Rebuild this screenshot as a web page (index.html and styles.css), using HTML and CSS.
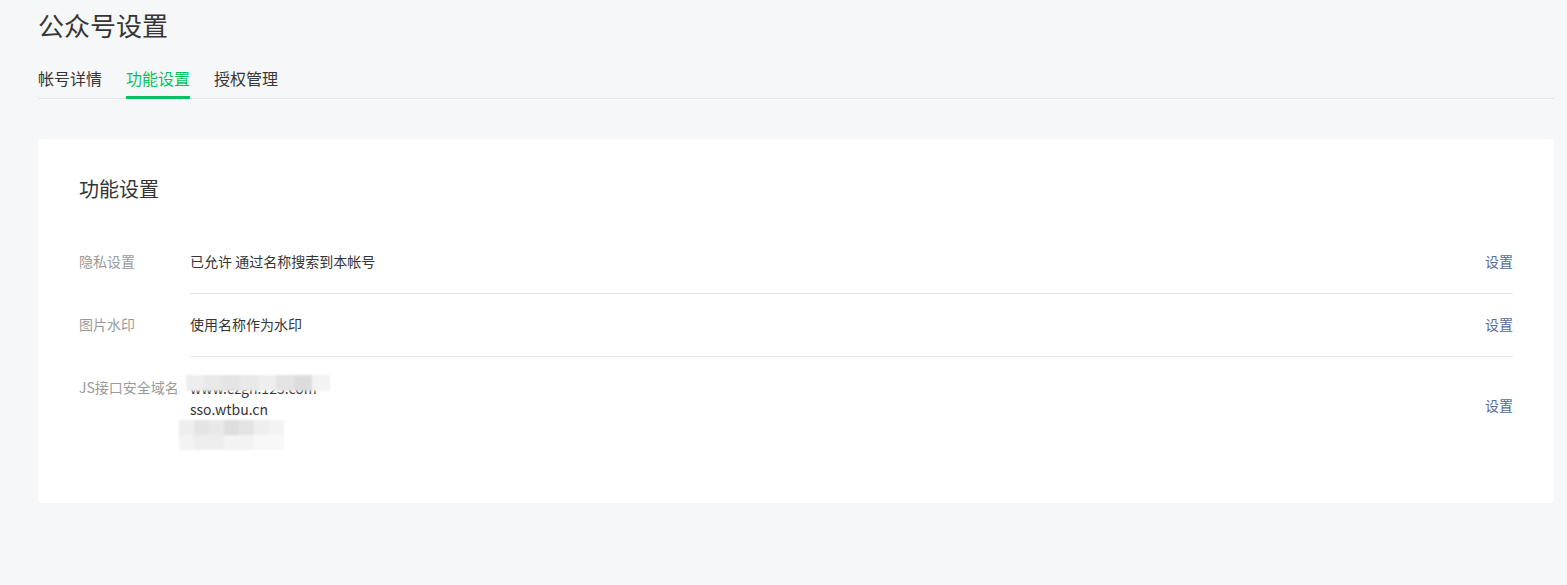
FILE: index.html
```html
<!DOCTYPE html>
<html lang="zh-CN">
<head>
<meta charset="utf-8">
<title>公众号设置</title>
<link rel="stylesheet" href="styles.css">
</head>
<body>
<div class="page">
  <h1 class="page-title">公众号设置</h1>
  <nav class="tabs">
    <a class="tab">帐号详情</a>
    <a class="tab active">功能设置</a>
    <a class="tab">授权管理</a>
  </nav>
  <section class="card">
    <h2 class="card-title">功能设置</h2>
    <div class="row">
      <div class="label">隐私设置</div>
      <div class="content">
        <div class="value">已允许 通过名称搜索到本帐号</div>
        <a class="action">设置</a>
      </div>
    </div>
    <div class="row">
      <div class="label">图片水印</div>
      <div class="content">
        <div class="value">使用名称作为水印</div>
        <a class="action">设置</a>
      </div>
    </div>
    <div class="row last">
      <div class="label">JS接口安全域名</div>
      <div class="content">
        <div class="value multi">
          <div class="line masked">www.ezgh.123.com
            <span class="mosaic m1"><i class="b4"></i><i class="b2"></i><i class="b1"></i><i class="b2"></i><i class="b4"></i><i class="b1"></i><i class="b3"></i><i class="b5"></i></span>
          </div>
          <div class="line">sso.wtbu.cn</div>
          <div class="line">
            <span class="mosaic m2">
              <span class="mrow"><i class="b4"></i><i class="b1"></i><i class="b2"></i><i class="b3"></i><i class="b1"></i><i class="b4"></i><i class="b5"></i></span>
              <span class="mrow"><i class="b5"></i><i class="b4"></i><i class="b4"></i><i class="b5"></i><i class="b5"></i><i class="b6"></i><i class="b6"></i></span>
            </span>
          </div>
        </div>
        <a class="action">设置</a>
      </div>
    </div>
  </section>
</div>
</body>
</html>
```

FILE: styles.css
```css
* { box-sizing: border-box; }
html, body {
  margin: 0;
  padding: 0;
  background: #f6f7f9;
  font-family: "Noto Sans CJK SC", "Microsoft YaHei", "Liberation Sans", sans-serif;
  color: #353535;
}
.page {
  width: 1516px;
  margin-left: 38px;
  padding-top: 7px;
}
.page-title {
  margin: 0;
  font-size: 26px;
  line-height: 36px;
  font-weight: 400;
  color: #353535;
}
.tabs {
  display: flex;
  gap: 24px;
  margin-top: 23px;
  border-bottom: 1px solid #e4e6ea;
}
.tab {
  display: block;
  font-size: 16px;
  line-height: 24px;
  padding-bottom: 6px;
  border-bottom: 3px solid transparent;
  margin-bottom: -1px;
  color: #353535;
  cursor: pointer;
}
.tab.active {
  color: #07c160;
  border-bottom-color: #07c160;
}
.card {
  margin-top: 40px;
  background: #fff;
  border-radius: 4px;
  padding: 36px 41px 41px 41px;
  height: 364px;
}
.card-title {
  margin: 0 0 28px 0;
  font-size: 20px;
  line-height: 28px;
  font-weight: 400;
  color: #353535;
}
.row {
  display: flex;
  font-size: 14px;
  line-height: 20px;
}
.label {
  width: 111px;
  flex: none;
  padding-top: 20px;
  color: #9a9a9a;
  white-space: nowrap;
}
.content {
  flex: 1;
  display: flex;
  align-items: center;
  justify-content: space-between;
  padding: 20px 0 22px 0;
  border-bottom: 1px solid #e7e7eb;
}
.row.last .content { border-bottom: none; }
.value { color: #353535; }
.value.multi { line-height: 21px; margin-top: 1px; }
.line { position: relative; height: 21px; }
.line.masked { color: #353535; }
.action {
  color: #576b95;
  cursor: pointer;
}
.row.last .action { margin-top: -8px; }
.mosaic {
  position: absolute;
  display: flex;
  filter: blur(1px);
}
.mosaic i { display: block; width: 16px; height: 15px; }
.m1 { left: -4px; top: -3px; }
.m1 i { height: 16px; width: 18px; }
.m2 { left: -11px; top: 0px; flex-direction: column; }
.m2 .mrow { display: flex; }
.m2 i { width: 15px; height: 15px; }
.b1 { background: #e4e4e4; }
.b2 { background: #e9e9e9; }
.b3 { background: #dddddd; }
.b4 { background: #eeeeee; }
.b5 { background: #f3f3f3; }
.b6 { background: #f8f8f8; }
```
